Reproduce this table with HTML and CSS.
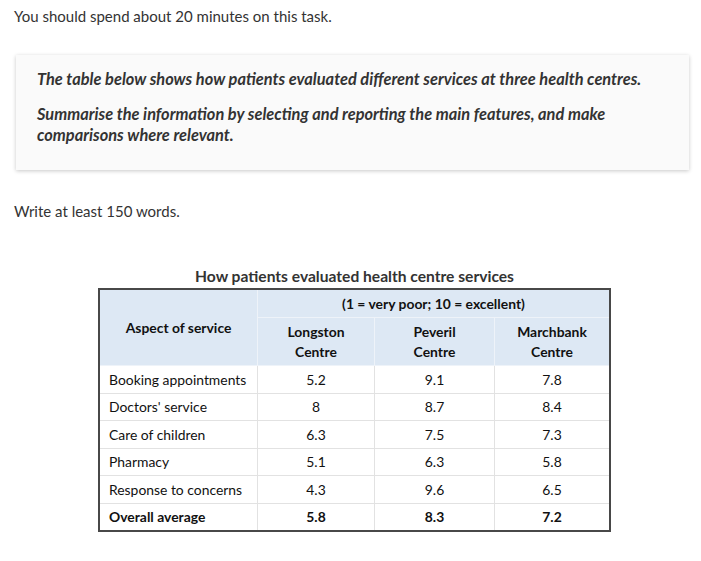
FILE: index.html
```html
<!DOCTYPE html>
<html>
<head>
<meta charset="utf-8">
<link rel="stylesheet" href="styles.css">
</head>
<body>
<div class="page">
  <p class="intro">You should spend about 20 minutes on this task.</p>
  <div class="task">
    <p>The table below shows how patients evaluated different services at three health centres.</p>
    <p>Summarise the information by selecting and reporting the main features, and make comparisons where relevant.</p>
  </div>
  <p class="words">Write at least 150 words.</p>
  <div class="figure">
    <div class="caption">How patients evaluated health centre services</div>
    <table class="data">
      <thead>
        <tr class="h1">
          <th rowspan="2" class="aspect">Aspect of service</th>
          <th colspan="3">(1 = very poor; 10 = excellent)</th>
        </tr>
        <tr class="h2">
          <th class="c1">Longston<br>Centre</th>
          <th class="c2">Peveril<br>Centre</th>
          <th class="c3">Marchbank<br>Centre</th>
        </tr>
      </thead>
      <tbody>
        <tr><td>Booking appointments</td><td>5.2</td><td>9.1</td><td>7.8</td></tr>
        <tr><td>Doctors' service</td><td>8</td><td>8.7</td><td>8.4</td></tr>
        <tr><td>Care of children</td><td>6.3</td><td>7.5</td><td>7.3</td></tr>
        <tr><td>Pharmacy</td><td>5.1</td><td>6.3</td><td>5.8</td></tr>
        <tr><td>Response to concerns</td><td>4.3</td><td>9.6</td><td>6.5</td></tr>
        <tr class="total"><td>Overall average</td><td>5.8</td><td>8.3</td><td>7.2</td></tr>
      </tbody>
    </table>
  </div>
</div>
</body>
</html>
```

FILE: styles.css
```css
html, body {
  margin: 0;
  padding: 0;
  background: #fff;
}
.page {
  padding: 5px 12px 0 14px;
  font-family: Lato, "Liberation Sans", sans-serif;
  color: #333;
  font-size: 15px;
}
.intro {
  margin: 0;
  line-height: 22px;
}
.task {
  margin: 28px 0 0 2px;
  width: 673px;
  box-sizing: border-box;
  background: #fafafa;
  box-shadow: 0 1px 4px rgba(0,0,0,0.22);
  padding: 13px 20px 25px 21px;
  font-style: italic;
  font-weight: bold;
  font-size: 16.4px;
  line-height: 21px;
  color: #333;
}
.task p {
  margin: 0;
}
.task p + p {
  margin-top: 14px;
}
.words {
  margin: 30px 0 0 0;
  line-height: 22px;
}
.figure {
  margin: 44px 0 0 84px;
  width: 513px;
}
.caption {
  text-align: center;
  font-weight: bold;
  font-size: 15.6px;
  line-height: 20px;
  color: #333;
  margin-bottom: 2px;
}
.data {
  border-collapse: collapse;
  border: 2px solid #484848;
  width: 513px;
  font-family: Lato, "Liberation Sans", sans-serif;
  font-size: 13.9px;
  color: #111;
}
.data th {
  background: #dde8f4;
  font-weight: bold;
  border: 1px solid #eef3f9;
  text-align: center;
  padding: 0;
}
.data .h1 th {
  height: 27px;
  line-height: 24px;
}
.data .h2 th {
  height: 47px;
  line-height: 20px;
}
.data th.aspect {
  width: 157px;
  line-height: 20px;
}
.data th.c1 { width: 116px; }
.data th.c2 { width: 119px; }
.data td {
  border: 1px solid #e2e2e2;
  height: 26.5px;
  padding: 0;
  text-align: center;
}
.data td:first-child {
  text-align: left;
  padding-left: 9px;
}
.data tr.total td {
  font-weight: bold;
}
```
